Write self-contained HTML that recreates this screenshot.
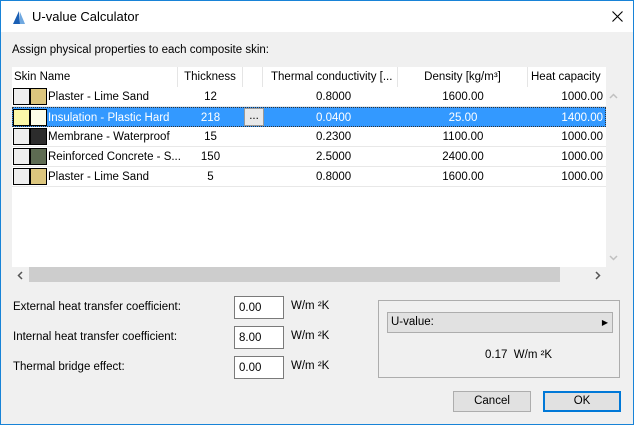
<!DOCTYPE html>
<html><head><style>
*{box-sizing:border-box;margin:0;padding:0}
body{width:634px;height:425px;overflow:hidden;font-family:"Liberation Sans",sans-serif;font-size:11.5px;color:#000;background:#f0f0f0;position:relative}
.win{position:absolute;left:0;top:0;width:634px;height:425px;border:1px solid #1883d7;background:#f0f0f0}
.title{position:absolute;left:0;top:0;width:632px;height:31px;background:#fff}
.abs{position:absolute;white-space:nowrap}
.tbl{position:absolute;left:12px;top:67px;width:594px;height:200px;background:#fff}
.hdr{position:absolute;top:0;height:20px;line-height:20px;border-right:1px solid #e5e5e5;color:#000}
.row{position:absolute;left:0;width:594px;height:20px;border-bottom:1px solid #e8e8e8;line-height:21px}
.row .c{position:absolute;top:0}
.sw{position:absolute;top:1px;width:17px;height:17px;border:1px solid #000}
.sel{background:#3399ff;color:#fff;border:1px dotted #333}
.inp{position:absolute;width:50px;height:23px;border:1px solid #7a7a7a;background:#fff;padding-left:4px;line-height:22px}
.btn{position:absolute;height:21px;background:#e1e1e1;border:1px solid #adadad;text-align:center;line-height:19px}
</style></head><body>
<div class="win">
<div class="title">
<svg class="abs" style="left:10px;top:8px" width="16" height="16" viewBox="0 0 16 16"><rect width="16" height="16" fill="#fff"/><path d="M2 15 L8 2 L9 15Z" fill="#1a5fb4"/><path d="M9 15 L9 3 L14 15Z" fill="#6fa8e0"/></svg>
<div class="abs" style="left:31px;top:8px;font-size:13px">U-value Calculator</div>
<svg class="abs" style="left:611px;top:10px" width="11" height="11" viewBox="0 0 11 11"><path d="M0.5 0.5L10.5 10.5M10.5 0.5L0.5 10.5" stroke="#000" stroke-width="1.1"/></svg>
</div>
<div class="abs" style="left:11px;top:43px">Assign physical properties to each composite skin:</div>
</div>
<div class="tbl">
<div class="hdr" style="left:0;width:166px;padding-left:2px">Skin Name</div>
<div class="hdr" style="left:166px;width:65px;text-align:center">Thickness</div>
<div class="hdr" style="left:231px;width:20px"></div>
<div class="hdr" style="left:251px;width:135px;padding-left:8px;overflow:hidden">Thermal conductivity [...</div>
<div class="hdr" style="left:386px;width:130px;text-align:center">Density [kg/m³]</div>
<div class="hdr" style="left:516px;width:78px;padding-left:3px;border:none;overflow:hidden">Heat capacity [</div>

<div class="row" style="top:20px"><div class="sw" style="left:1px;background:#eee"></div><div class="sw" style="left:18px;background:#dcc67e"></div><div class="c" style="left:36px">Plaster - Lime Sand</div><div class="c" style="left:166px;width:65px;text-align:center">12</div><div class="c" style="left:304px">0.8000</div><div class="c" style="left:386px;width:130px;text-align:center">1600.00</div><div class="c" style="left:516px;width:75px;text-align:right">1000.00</div></div>
<div class="row sel" style="top:40px"><div class="sw" style="left:0;background:#fbf7a8"></div><div class="sw" style="left:17px;background:#fdfde8"></div><div class="c" style="left:35px">Insulation - Plastic Hard</div><div class="c" style="left:165px;width:65px;text-align:center">218</div><div class="c" style="left:231px;top:0;width:20px;height:18px;background:#e8e8e8;border:1px solid #999;color:#000;text-align:center;line-height:14px">...</div><div class="c" style="left:303px">0.0400</div><div class="c" style="left:385px;width:130px;text-align:center">25.00</div><div class="c" style="left:515px;width:75px;text-align:right">1400.00</div></div>
<div class="row" style="top:60px"><div class="sw" style="left:1px;background:#eee"></div><div class="sw" style="left:18px;background:#2c2c2c"></div><div class="c" style="left:36px">Membrane - Waterproof</div><div class="c" style="left:166px;width:65px;text-align:center">15</div><div class="c" style="left:304px">0.2300</div><div class="c" style="left:386px;width:130px;text-align:center">1100.00</div><div class="c" style="left:516px;width:75px;text-align:right">1000.00</div></div>
<div class="row" style="top:80px"><div class="sw" style="left:1px;background:#eee"></div><div class="sw" style="left:18px;background:#5d6b52"></div><div class="c" style="left:36px">Reinforced Concrete - S...</div><div class="c" style="left:166px;width:65px;text-align:center">150</div><div class="c" style="left:304px">2.5000</div><div class="c" style="left:386px;width:130px;text-align:center">2400.00</div><div class="c" style="left:516px;width:75px;text-align:right">1000.00</div></div>
<div class="row" style="top:100px"><div class="sw" style="left:1px;background:#eee"></div><div class="sw" style="left:18px;background:#dcc67e"></div><div class="c" style="left:36px">Plaster - Lime Sand</div><div class="c" style="left:166px;width:65px;text-align:center">5</div><div class="c" style="left:304px">0.8000</div><div class="c" style="left:386px;width:130px;text-align:center">1600.00</div><div class="c" style="left:516px;width:75px;text-align:right">1000.00</div></div>
</div>
<svg class="abs" style="left:609px;top:93px" width="9" height="6"><path d="M1 5L4.5 1.5L8 5" stroke="#c0c0c0" stroke-width="1.5" fill="none"/></svg>
<svg class="abs" style="left:609px;top:255px" width="9" height="6"><path d="M1 1L4.5 4.5L8 1" stroke="#c0c0c0" stroke-width="1.5" fill="none"/></svg>
<div class="abs" style="left:29px;top:267px;width:531px;height:15px;background:#cdcdcd"></div>
<svg class="abs" style="left:17px;top:271px" width="6" height="9"><path d="M5 1L1.5 4.5L5 8" stroke="#555" stroke-width="1.5" fill="none"/></svg>
<svg class="abs" style="left:595px;top:271px" width="6" height="9"><path d="M1 1L4.5 4.5L1 8" stroke="#555" stroke-width="1.5" fill="none"/></svg>

<div class="abs" style="left:13px;top:301px">External heat transfer coefficient:</div>
<div class="abs" style="left:13px;top:331px">Internal heat transfer coefficient:</div>
<div class="abs" style="left:13px;top:361px">Thermal bridge effect:</div>
<div class="inp" style="left:234px;top:296px">0.00</div>
<div class="inp" style="left:234px;top:326px">8.00</div>
<div class="inp" style="left:234px;top:356px">0.00</div>
<div class="abs" style="left:291px;top:300px">W/m ²K</div>
<div class="abs" style="left:291px;top:330px">W/m ²K</div>
<div class="abs" style="left:291px;top:360px">W/m ²K</div>

<div class="abs" style="left:378px;top:300px;width:242px;height:78px;border:1px solid #adadad"></div>
<div class="abs" style="left:387px;top:312px;width:226px;height:21px;background:#e1e1e1;border:1px solid #adadad;padding-left:3px;line-height:19px">U-value:<span style="position:absolute;right:4px;font-size:8px">▶</span></div>
<div class="abs" style="left:485px;top:349px">0.17&nbsp; W/m ²K</div>

<div class="btn" style="left:453px;top:391px;width:78px">Cancel</div>
<div class="btn" style="left:543px;top:391px;width:78px;border:2px solid #0078d7;line-height:17px">OK</div>
</body></html>
